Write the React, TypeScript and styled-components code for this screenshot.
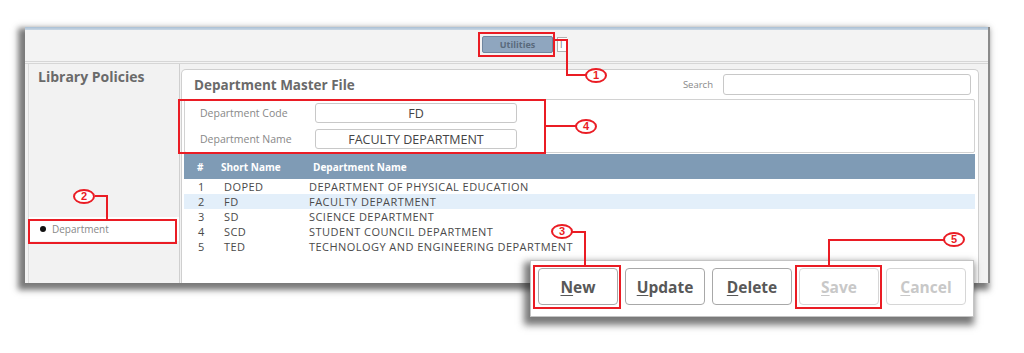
import React from "react";
import styled, { createGlobalStyle } from "styled-components";

const GlobalStyle = createGlobalStyle`
  html, body { margin: 0; padding: 0; background: #ffffff; }
  body { font-family: "Open Sans", "Liberation Sans", sans-serif; }
  * { box-sizing: border-box; }
`;

const Stage = styled.div`
  position: relative;
  width: 1024px;
  height: 353px;
  padding: 27px 0 0 25px;
  overflow: hidden;
  background: #ffffff;
`;

const Window = styled.div`
  width: 965px;
  height: 256px;
  display: flex;
  flex-direction: column;
  background: #f2f2f2;
  border-right: 2px solid #8a8a8a;
  box-shadow: -4px 4px 6px 3px rgba(40, 40, 40, 0.62);
`;

const TopLine = styled.div`
  height: 3px;
  background: linear-gradient(#a9bfd4, #c9d7e4);
`;

const Toolbar = styled.div`
  height: 34px;
  display: flex;
  align-items: center;
  padding-left: 457px;
  padding-bottom: 2px;
  background: #f3f3f3;
  border-bottom: 3px double #d6d6d6;
`;

const UtilButton = styled.div`
  width: 71px;
  height: 17px;
  display: flex;
  align-items: center;
  justify-content: center;
  background: #8fa6bf;
  border: 1px solid #6f869f;
  border-radius: 2px;
  font-size: 9px;
  font-weight: 700;
  color: #5a6a7c;
`;

const StubButton = styled.div`
  width: 10px;
  height: 15px;
  margin-left: 4px;
  background: #ffffff;
  border: 1px solid #b0b0b0;
  border-right: none;
  font-size: 9px;
  color: #777;
  padding-left: 2px;
  line-height: 13px;
`;

const Body = styled.div`
  flex: 1;
  display: flex;
  min-height: 0;
`;

const Sidebar = styled.div`
  width: 152px;
  margin-left: 3px;
  padding-top: 4px;
  background: #f2f2f2;
  border-left: 1px solid #dcdcdc;
  border-right: 1px solid #cfcfcf;
  display: flex;
  flex-direction: column;
`;

const SideTitle = styled.div`
  padding-left: 9px;
  line-height: 18px;
  font-size: 14px;
  font-weight: 700;
  color: #6a6a6a;
`;

const SideItem = styled.div`
  margin-top: 131px;
  height: 24px;
  display: flex;
  align-items: center;
  padding-left: 11px;
  background: #ffffff;
  font-size: 10px;
  color: #888;
`;

const Bullet = styled.span`
  width: 6px;
  height: 6px;
  border-radius: 50%;
  background: #111;
  margin-right: 6px;
`;

const Content = styled.div`
  flex: 1;
  padding: 5px 9px 0 1px;
  display: flex;
  background: #f2f2f2;
`;

const Panel = styled.div`
  flex: 1;
  display: flex;
  flex-direction: column;
  background: #ffffff;
  border: 1px solid #cfcfcf;
  border-bottom: none;
  border-radius: 5px 5px 0 0;
  padding: 0 3px 0 1px;
`;

const PanelHeader = styled.div`
  height: 29px;
  display: flex;
  align-items: center;
  padding: 0 4px 0 11px;
`;

const PanelTitle = styled.div`
  flex: 1;
  font-size: 13.5px;
  font-weight: 700;
  color: #6a6a6a;
`;

const SearchLabel = styled.span`
  font-size: 9.5px;
  color: #888;
  margin-right: 10px;
`;

const SearchInput = styled.div`
  width: 248px;
  height: 21px;
  border: 1px solid #c8c8c8;
  border-radius: 3px;
  background: #fff;
`;

const FormBox = styled.div`
  height: 54px;
  margin-left: 1px;
  border: 1px solid #d2d2d2;
  border-radius: 2px;
  padding: 3px 0 0 15px;
  display: flex;
  flex-direction: column;
  gap: 6px;
`;

const FormRow = styled.div`
  display: flex;
  align-items: center;
  height: 20px;
`;

const FormLabel = styled.span`
  width: 115px;
  font-size: 10.5px;
  color: #888;
`;

const FormInput = styled.div`
  width: 202px;
  height: 20px;
  border: 1px solid #c8c8c8;
  border-radius: 3px;
  display: flex;
  align-items: center;
  justify-content: center;
  font-size: 12.5px;
  color: #444;
`;

const TableHead = styled.div`
  margin: 1px 0 0 1px;
  height: 25px;
  display: grid;
  grid-template-columns: 24px 92px 1fr;
  align-items: center;
  padding-left: 13px;
  background: #7f9bb5;
  font-size: 10px;
  font-weight: 700;
  color: #ffffff;
`;

const TableRow = styled.div<{ $active?: boolean }>`
  margin-left: 1px;
  height: 15px;
  display: grid;
  grid-template-columns: 26px 85px 1fr;
  align-items: center;
  padding-left: 14px;
  background: ${(p) => (p.$active ? "#e3effa" : "#ffffff")};
  font-size: 11px;
  letter-spacing: 0.45px;
  color: #4a4a4a;
`;

const Popup = styled.div`
  position: absolute;
  left: 530px;
  top: 260px;
  width: 444px;
  height: 57px;
  padding: 7px 0 0 7px;
  display: flex;
  gap: 7px;
  background: #ffffff;
  border: 1px solid #c4c4c4;
  box-shadow: -3px 5px 7px 3px rgba(30, 30, 30, 0.6);
  z-index: 2;
`;

const ActionButton = styled.div<{ $disabled?: boolean }>`
  width: 80px;
  height: 37px;
  display: flex;
  align-items: center;
  justify-content: center;
  border: 1px solid ${(p) => (p.$disabled ? "#d6d6d6" : "#a8a8a8")};
  border-radius: 4px;
  background: #ffffff;
  font-size: 15.5px;
  font-weight: 700;
  color: ${(p) => (p.$disabled ? "#c8c8c8" : "#585858")};
  u { text-decoration-thickness: 1px; text-underline-offset: 2px; }
`;

const RedBox = styled.div`
  position: absolute;
  border: 2px solid #ea1c24;
  z-index: 3;
  pointer-events: none;
`;

const Badge = styled.span`
  position: absolute;
  width: 22px;
  height: 15px;
  border: 2px solid #ea1c24;
  border-radius: 50%;
  background: #ffffff;
  color: #ea1c24;
  font-family: "Liberation Sans", sans-serif;
  font-size: 11px;
  font-weight: 700;
  line-height: 11px;
  text-align: center;
  z-index: 4;
`;

const Leaders = styled.svg`
  position: absolute;
  left: 0;
  top: 0;
  z-index: 3;
  pointer-events: none;
`;

const rows = [
  ["1", "DOPED", "DEPARTMENT OF PHYSICAL EDUCATION"],
  ["2", "FD", "FACULTY DEPARTMENT"],
  ["3", "SD", "SCIENCE DEPARTMENT"],
  ["4", "SCD", "STUDENT COUNCIL DEPARTMENT"],
  ["5", "TED", "TECHNOLOGY AND ENGINEERING DEPARTMENT"],
];

const buttons: { first: string; rest: string; disabled?: boolean }[] = [
  { first: "N", rest: "ew" },
  { first: "U", rest: "pdate" },
  { first: "D", rest: "elete" },
  { first: "S", rest: "ave", disabled: true },
  { first: "C", rest: "ancel", disabled: true },
];

const boxes = [
  { l: 478, t: 32, w: 77, h: 25 },
  { l: 28, t: 219, w: 149, h: 25 },
  { l: 533, t: 265, w: 88, h: 44 },
  { l: 178, t: 99, w: 368, h: 55 },
  { l: 795, t: 265, w: 87, h: 44 },
];

const badges = [
  { n: "1", l: 585, t: 68 },
  { n: "2", l: 73, t: 189 },
  { n: "3", l: 551, t: 224 },
  { n: "4", l: 575, t: 119 },
  { n: "5", l: 943, t: 232 },
];

export default function App() {
  return (
    <>
      <GlobalStyle />
      <Stage>
        <Window>
          <TopLine />
          <Toolbar>
            <UtilButton>Utilities</UtilButton>
            <StubButton>I</StubButton>
          </Toolbar>
          <Body>
            <Sidebar>
              <SideTitle>Library Policies</SideTitle>
              <SideItem>
                <Bullet />
                Department
              </SideItem>
            </Sidebar>
            <Content>
              <Panel>
                <PanelHeader>
                  <PanelTitle>Department Master File</PanelTitle>
                  <SearchLabel>Search</SearchLabel>
                  <SearchInput />
                </PanelHeader>
                <FormBox>
                  <FormRow>
                    <FormLabel>Department Code</FormLabel>
                    <FormInput>FD</FormInput>
                  </FormRow>
                  <FormRow>
                    <FormLabel>Department Name</FormLabel>
                    <FormInput>FACULTY DEPARTMENT</FormInput>
                  </FormRow>
                </FormBox>
                <TableHead>
                  <span>#</span>
                  <span>Short Name</span>
                  <span>Department Name</span>
                </TableHead>
                {rows.map((r) => (
                  <TableRow key={r[0]} $active={r[0] === "2"}>
                    <span>{r[0]}</span>
                    <span>{r[1]}</span>
                    <span>{r[2]}</span>
                  </TableRow>
                ))}
              </Panel>
            </Content>
          </Body>
        </Window>

        <Popup>
          {buttons.map((b) => (
            <ActionButton key={b.first} $disabled={b.disabled}>
              <u>{b.first}</u>
              {b.rest}
            </ActionButton>
          ))}
        </Popup>

        <Leaders width={1024} height={353} viewBox="0 0 1024 353">
          <g fill="none" stroke="#ea1c24" strokeWidth={2}>
            <polyline points="555,40 567,40 567,75 586,75" />
            <polyline points="95,196 107,196 107,220" />
            <polyline points="572,232 585,232 585,266" />
            <polyline points="546,126 576,126" />
            <polyline points="944,240 829,240 829,266" />
          </g>
        </Leaders>

        {boxes.map((b, i) => (
          <RedBox
            key={i}
            style={{ left: b.l, top: b.t, width: b.w, height: b.h }}
          />
        ))}
        {badges.map((b) => (
          <Badge key={b.n} style={{ left: b.l, top: b.t }}>
            {b.n}
          </Badge>
        ))}
      </Stage>
    </>
  );
}
